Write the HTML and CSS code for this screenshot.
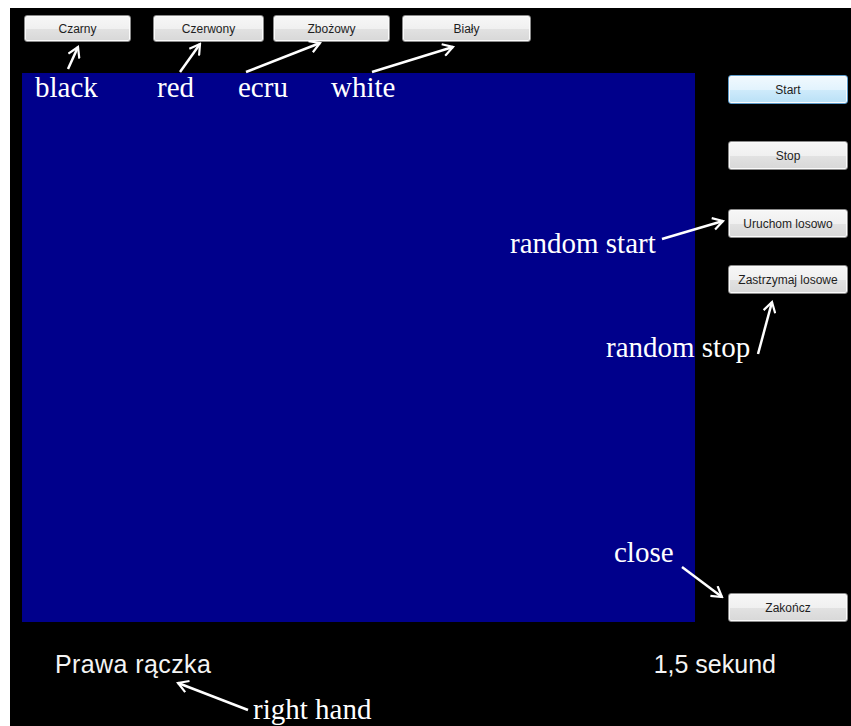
FILE: index.html
```html
<!DOCTYPE html>
<html lang="pl">
<head>
    <meta charset="UTF-8">
    <title>Prawa rączka</title>
    <link rel="stylesheet" href="styles.css">
</head>
<body>
    <div class="window">
        <div class="toolbar">
            <button class="btn btn-black">Czarny</button>
            <button class="btn btn-red">Czerwony</button>
            <button class="btn btn-ecru">Zbożowy</button>
            <button class="btn btn-white">Biały</button>
        </div>
        <div class="main">
            <div class="canvas"></div>
            <div class="side">
                <button class="btn btn-side btn-active">Start</button>
                <button class="btn btn-side btn-stop">Stop</button>
                <button class="btn btn-side btn-rstart">Uruchom losowo</button>
                <button class="btn btn-side btn-rstop">Zastrzymaj losowe</button>
                <button class="btn btn-side btn-close">Zakończ</button>
            </div>
        </div>
        <div class="footer">
            <span class="hand">Prawa rączka</span>
            <span class="speed">1,5 sekund</span>
        </div>
    </div>

    <!-- notes drawn over the screenshot -->
    <svg class="notes" width="851" height="726" viewBox="0 0 851 726">
        <defs>
            <marker id="head" viewBox="0 0 14 14" refX="12" refY="7" markerWidth="14" markerHeight="14" markerUnits="userSpaceOnUse" orient="auto">
                <path d="M2,1 L12,7 L2,13" fill="none" stroke="#fff" stroke-width="2.2"/>
            </marker>
        </defs>
        <g class="arrows">
            <line x1="68" y1="69" x2="78" y2="47"/>
            <line x1="180" y1="72" x2="200" y2="44"/>
            <line x1="246" y1="72" x2="320" y2="43"/>
            <line x1="372" y1="72" x2="453" y2="47"/>
            <line x1="662" y1="239" x2="723" y2="221"/>
            <line x1="758" y1="354" x2="772" y2="302"/>
            <line x1="682" y1="567" x2="722" y2="597"/>
            <line x1="248" y1="710" x2="178" y2="683"/>
        </g>
        <g class="labels">
            <text x="35" y="97">black</text>
            <text x="157" y="97">red</text>
            <text x="238" y="97">ecru</text>
            <text x="331" y="97">white</text>
            <text x="510" y="253">random start</text>
            <text x="606" y="357">random stop</text>
            <text x="614" y="562">close</text>
            <text x="253" y="719">right hand</text>
        </g>
    </svg>
</body>
</html>
```

FILE: styles.css
```css
html {
    background-color: #fff;
}
body {
    margin: 8px 0 0 10px;
    font-family: "Liberation Sans", Arial, sans-serif;
}
.window {
    background-color: #000;
    height: 718px;
    padding: 7px 0 0 12px;
    box-sizing: border-box;
}
.toolbar {
    display: flex;
    height: 27px;
    padding-left: 2px;
}
.btn {
    font-family: "Liberation Sans", Arial, sans-serif;
    font-size: 12px;
    color: #1e1e1e;
    height: 27px;
    padding: 0;
    border: 1px solid #8a8a8a;
    border-radius: 3px;
    background: linear-gradient(#f7f7f7 0%, #f0f0f0 50%, #e2e2e2 51%, #d8d8d8 100%);
    box-shadow: inset 0 0 0 1px #fbfbfb;
}
.btn-black {
    width: 107px;
}
.btn-red {
    width: 111px;
    margin-left: 22px;
}
.btn-ecru {
    width: 117px;
    margin-left: 9px;
}
.btn-white {
    width: 129px;
    margin-left: 12px;
}
.main {
    display: flex;
    margin-top: 31px;
}
.canvas {
    width: 673px;
    height: 549px;
    background-color: #00008b;
}
.side {
    display: flex;
    flex-direction: column;
    margin-left: 33px;
    padding-top: 2px;
    box-sizing: border-box;
}
.btn-side {
    width: 120px;
    height: 29px;
}
.btn-active {
    border-color: #5c9ccb;
    background: linear-gradient(#f1f9fe 0%, #e2f3fd 50%, #cfebfb 51%, #b9e0f6 100%);
}
.btn-stop {
    margin-top: 37px;
}
.btn-rstart {
    margin-top: 39px;
}
.btn-rstop {
    margin-top: 27px;
}
.btn-close {
    margin-top: auto;
}
.footer {
    display: flex;
    margin-top: 27px;
    padding-left: 33px;
    color: #f4f4f4;
    font-size: 25px;
    line-height: 30px;
}
.hand {
    letter-spacing: 0.4px;
}
.speed {
    margin-left: auto;
    margin-right: 75px;
}
.notes {
    position: absolute;
    top: 0;
    left: 0;
    pointer-events: none;
}
.arrows line {
    stroke: #fff;
    stroke-width: 2.5;
    marker-end: url(#head);
}
.labels text {
    fill: #fff;
    font-family: "Liberation Serif", "Times New Roman", serif;
    font-size: 29px;
}
```
